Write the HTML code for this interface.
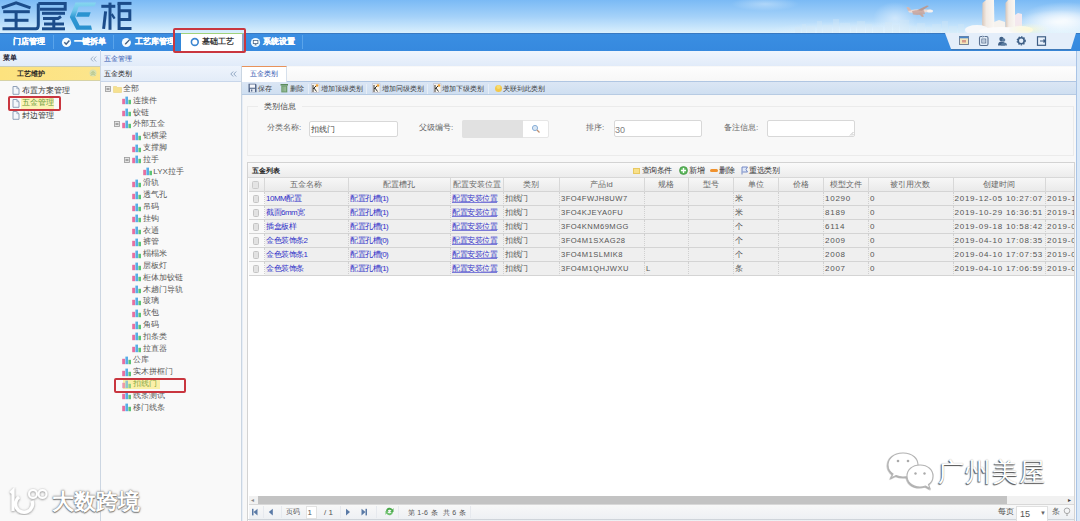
<!DOCTYPE html><html><head><meta charset="utf-8"><style>
*{box-sizing:border-box;margin:0;padding:0}
html,body{width:1080px;height:521px;overflow:hidden;background:#f8f8f8;font-family:"Liberation Sans",sans-serif;font-size:8px;color:#333}
.a{position:absolute}
.t{position:absolute;white-space:nowrap;line-height:10px}
svg{position:absolute;overflow:visible}
</style></head><body>
<div class="a" style="left:0;top:0;width:1080px;height:33px;background:linear-gradient(#7abaf5,#a4d1f9 50%,#daf0fd)"></div>
<div class="a" style="left:690px;top:0;width:390px;height:33px;background:radial-gradient(ellipse 34px 7px at 75px 4px,rgba(255,255,255,.35),rgba(255,255,255,0)),radial-gradient(ellipse 22px 16px at 205px 18px,rgba(255,255,255,.45),rgba(255,255,255,0)),radial-gradient(ellipse 90px 9px at 170px 30px,rgba(255,255,255,.35),rgba(255,255,255,0)),radial-gradient(ellipse 45px 18px at 375px 20px,rgba(255,255,255,.75),rgba(255,255,255,0))"></div>
<svg style="left:795px;top:0" width="175" height="33" viewBox="0 0 175 33"><g fill="#d4e8f6" opacity=".35"><rect x="0" y="27" width="6" height="6"/><rect x="7" y="24" width="4" height="9"/><rect x="12" y="26" width="8" height="7"/><rect x="22" y="21" width="5" height="12"/><rect x="28" y="25" width="9" height="8"/><rect x="38" y="19" width="6" height="14"/><rect x="45" y="23" width="10" height="10"/><rect x="56" y="26" width="5" height="7"/><rect x="62" y="21" width="8" height="12"/><rect x="71" y="24" width="6" height="9"/><rect x="78" y="27" width="10" height="6"/><rect x="90" y="22" width="7" height="11"/><rect x="98" y="25" width="6" height="8"/><rect x="105" y="20" width="9" height="13"/><rect x="115" y="26" width="6" height="7"/><rect x="122" y="23" width="8" height="10"/><rect x="131" y="27" width="5" height="6"/><rect x="137" y="24" width="9" height="9"/><rect x="147" y="21" width="6" height="12"/><rect x="154" y="26" width="8" height="7"/><rect x="163" y="24" width="6" height="9"/></g></svg>
<svg style="left:905px;top:3px" width="30" height="16" viewBox="0 0 30 16"><path d="M3 7.5 Q14 5.5 26 6.8 Q29 7.6 26 9 Q14 10.2 4 9.6Z" fill="#ecdcd6"/><path d="M7 8 Q12 6.5 19 7.2 L20 11 Q13 12.5 8 11.5Z" fill="#c9a59c" opacity=".85"/><path d="M12 7.2 L22 2.5 L24 3 L17 7.8Z" fill="#b89a94"/><path d="M13 10 L17 14 L19 13.6 L16.5 9.6Z" fill="#c4a8a0"/><ellipse cx="25" cy="8" rx="3" ry="1.6" fill="#f6f2f0"/><path d="M3 7.8 L1.5 4 L4 4.2 L6.5 7.5Z" fill="#d6b8b0"/></svg>
<svg style="left:955px;top:0" width="90" height="33" viewBox="0 0 90 33"><defs><linearGradient id="bg1" x1="0" x2="1"><stop offset="0" stop-color="#d9c6b8"/><stop offset=".35" stop-color="#f2ebe5"/><stop offset="1" stop-color="#faf7f3"/></linearGradient></defs><path d="M27 33 L27.5 3 L31 0 L39 0 L39.5 33Z" fill="url(#bg1)"/><path d="M50.5 33 L50.5 3 L53 0 L60 0 L60 33Z" fill="url(#bg1)"/><path d="M60 33 L60 15 L63 13 L67 14 L67 33Z" fill="#f4e8ee"/><path d="M39 33 L39 22 L44 20 L50 22 L50 33Z" fill="#f6f3ef"/><ellipse cx="22" cy="30" rx="12" ry="5" fill="#f6f8fa"/><ellipse cx="46" cy="31" rx="22" ry="4" fill="#fbfbfb"/><ellipse cx="66" cy="30" rx="12" ry="4" fill="#f8f8f4"/></svg>
<div class="a" style="left:1010px;top:8px;width:70px;height:25px;background:radial-gradient(ellipse 40px 12px at 48px 14px,rgba(255,255,255,.75),rgba(255,255,255,0)),radial-gradient(ellipse 20px 6px at 20px 21px,rgba(255,250,200,.7),rgba(255,255,255,0))"></div>
<svg style="left:0;top:0" width="140" height="33" viewBox="0 0 140 33"><g fill="none" stroke="#1b4c8a" stroke-width="3" stroke-linecap="butt" stroke-linejoin="miter"><path d="M1.8 7.8 L16.1 2.9 L30.5 7.8"/><path d="M3.2 11.7 H29.8"/><path d="M4.4 20.3 H28.5"/><path d="M16.1 11.7 V28.8"/><path d="M2.5 28.8 H36 Q38.3 28.8 38.3 25 V3.5"/><path d="M38.3 3.5 H65.2 V9.2 H40"/><path d="M42 13.3 H65"/><path d="M43 18.4 H58 L61 16.5"/><path d="M44 24 H64"/><path d="M53.8 18.4 V28.8"/><path d="M42 28.8 H65"/><path d="M101.3 6.3 H115.3"/><path d="M110 2.6 V29.8"/><path d="M105.6 11.3 L103.6 28.8"/><path d="M111.6 14 L114.6 18.6" stroke-width="2.3"/><path d="M117.5 3.4 H131.5"/><path d="M119.1 3.4 V28.5 H131.5"/><path d="M119.1 10.8 H129.8 V19.4 H119.1"/></g><defs><linearGradient id="eg" x1="0" y1="0" x2="0" y2="1"><stop offset="0" stop-color="#86d6ef"/><stop offset=".3" stop-color="#6cc4ea"/><stop offset=".55" stop-color="#2f98d3"/><stop offset="1" stop-color="#2a90ce"/></linearGradient></defs><path d="M75.5 2.5 L96.1 2.5 L94.5 6.3 L78.7 6.5 L75.2 17 L79.6 25.6 L91 25.6 L92 29.7 L76.4 29.7 L69.8 17.1 Z" fill="url(#eg)"/><path d="M78 12.3 L90.7 12.3 L89.1 16.8 L76.1 16.8 Z" fill="#2b93d0"/></svg>
<div class="a" style="left:0;top:33px;width:1080px;height:17.5px;background:linear-gradient(#3a8ee2,#3689de);border-top:1px solid #3879c2"></div>
<div class="a" style="left:53px;top:35px;width:1px;height:14px;background:#5aa4ea"></div>
<div class="a" style="left:113px;top:35px;width:1px;height:14px;background:#5aa4ea"></div>
<div class="a" style="left:302px;top:35px;width:1px;height:14px;background:#5aa4ea"></div>
<svg style="left:940px;top:33px" width="140" height="18" viewBox="0 0 140 18"><path d="M5 0 H136 L131 16 H11 Z" fill="#e4eefa"/><path d="M11 16 H131 L130.6 17.2 H11.3Z" fill="#3f79b8"/></svg>
<svg style="left:955px;top:35px" width="95" height="12" viewBox="0 0 95 12"><rect x="4.5" y="1.5" width="9" height="8" fill="#f3e6bc" stroke="#6a7a90" stroke-width=".9"/><rect x="4.5" y="1.5" width="9" height="1.8" fill="#4a86c8"/><rect x="7" y="5" width="4" height="2.5" fill="#d89a8a"/><path d="M27 1.5 H25.8 Q24.5 1.5 24.5 3 V9 Q24.5 10.5 26 10.5 H31.5 Q33 10.5 33 9 V3 Q33 1.5 31.5 1.5 H29.5" fill="#e4eef9" stroke="#5a7090" stroke-width="1.1"/><path d="M27.5 0.5 L29.3 1.5 L27.5 2.7Z" fill="#5a7090"/><rect x="26.8" y="4" width="4" height="4" fill="none" stroke="#5a7090" stroke-width=".8"/><path d="M27.5 6 H30" stroke="#5a7090" stroke-width=".6"/><circle cx="46.5" cy="4" r="2.2" fill="#3f5f86"/><path d="M43 10.5 Q43 6.5 46.5 6.5 Q50 6.5 50 10.5Z" fill="#3f5f86"/><circle cx="48.5" cy="5" r="1.8" fill="#5a7a9e"/><path d="M46 10.5 Q46 7.5 49 7.5 Q52 7.5 52 10.5Z" fill="#5a7a9e"/><circle cx="66.2" cy="5.8" r="3" fill="none" stroke="#3f5f86" stroke-width="1.6"/><circle cx="66.2" cy="5.8" r="4" fill="none" stroke="#3f5f86" stroke-width="1.3" stroke-dasharray="1.4 1.2"/><rect x="82.5" y="1.8" width="8" height="8.5" fill="#e8f0fa" stroke="#3f5f86" stroke-width="1.2"/><path d="M85 6 H90 M88.5 4.5 L90.3 6 L88.5 7.5" stroke="#3f5f86" stroke-width="1.2" fill="none"/></svg>
<div class="t" style="left:13px;top:37px;color:#fff;font-weight:bold;-webkit-text-stroke:.2px #fff">门店管理</div>
<svg style="left:62px;top:38px" width="10" height="10" viewBox="0 0 10 10"><circle cx="4.5" cy="4.4" r="4.6" fill="#f6fcff"/><path d="M2.3 4.2 L4.2 6.2 L7.4 2.4" stroke="#44638a" stroke-width="1.5" fill="none"/></svg>
<div class="t" style="left:74px;top:37px;color:#fff;font-weight:bold;-webkit-text-stroke:.2px #fff">一键拆单</div>
<svg style="left:122px;top:38px" width="10" height="10" viewBox="0 0 10 10"><circle cx="4.4" cy="4.5" r="4.5" fill="#f4fbff"/><path d="M6.2 0.3 L9.5 0 L9.5 3.2Z" fill="#3a8de0"/><path d="M3.2 6.3 L7.6 1.6" stroke="#3c5878" stroke-width="1.3" fill="none"/><path d="M2.6 7 L3.2 5.8 L3.9 6.5Z" fill="#e8b090"/></svg>
<div class="t" style="left:135px;top:37px;color:#fff;font-weight:bold;-webkit-text-stroke:.2px #fff">工艺库管理</div>
<svg style="left:250.8px;top:38px" width="10" height="10" viewBox="0 0 10 10"><circle cx="4.5" cy="4.5" r="4.6" fill="#ecf9ff"/><rect x="2.3" y="2.4" width="4.6" height="3.2" fill="#fff" stroke="#4a6688" stroke-width=".8"/><path d="M4.6 5.6 V6.8 M3.6 6.9 H5.6" stroke="#4a6688" stroke-width=".8"/></svg>
<div class="t" style="left:263px;top:37px;color:#fff;font-weight:bold;-webkit-text-stroke:.2px #fff">系统设置</div>
<div class="a" style="left:174px;top:33px;width:7px;height:17.5px;background:#3287d9"></div>
<div class="a" style="left:181px;top:33px;width:63px;height:17.5px;background:#fff;border-top:1px solid #9fd27c;border-right:2px solid #8aa4c8"></div>
<svg style="left:190px;top:37px" width="10" height="10" viewBox="0 0 10 10"><circle cx="4.8" cy="5" r="3.4" fill="none" stroke="#3a85d0" stroke-width="1.6"/></svg>
<div class="t" style="left:202px;top:37px;color:#333;font-weight:bold">基础工艺</div>
<div class="a" style="left:0;top:50.5px;width:1080px;height:16px;background:linear-gradient(#eff5fd,#e1ebf9);border-bottom:1px solid #c2d2e8"></div>
<div class="a" style="left:0;top:66px;width:100px;height:455px;background:#f9f9f9"></div>
<div class="a" style="left:100px;top:50px;width:1px;height:16px;background:#c8d6ea"></div>
<div class="t" style="left:3px;top:53px;color:#223;font-weight:bold;font-size:7px">菜单</div>
<svg style="left:90px;top:55.5px" width="7" height="6" viewBox="0 0 7 6"><path d="M3.2 .5 L.8 3 L3.2 5.5 M6.2 .5 L3.8 3 L6.2 5.5" stroke="#9fb2c8" stroke-width="1" fill="none"/></svg>
<div class="a" style="left:0;top:65.5px;width:100px;height:15.5px;background:linear-gradient(90deg,#fde27e,#fce58c);border-top:1px solid #c9cdb8;border-bottom:1px solid #d6d2a6"></div>
<div class="t" style="left:17px;top:68.5px;color:#222;font-weight:bold;font-size:7px">工艺维护</div>
<svg style="left:89px;top:69px" width="8" height="8" viewBox="0 0 8 8"><circle cx="4" cy="4" r="3.5" fill="#d7dfb0"/><path d="M2 4.5 L4 2.5 L6 4.5 M2 6.5 L4 4.5 L6 6.5" stroke="#9ab070" stroke-width=".8" fill="none"/></svg>
<svg style="left:12px;top:86.0px" width="8" height="9" viewBox="0 0 8 9"><path d="M1 0.5 H4.8 L7 2.7 V8.3 H1Z" fill="#f4f7fb" stroke="#8496b0" stroke-width=".9"/><path d="M4.8 .5 V2.7 H7" fill="none" stroke="#8496b0" stroke-width=".6"/></svg>
<div class="t" style="left:22px;top:85.5px;color:#333">布置方案管理</div>
<svg style="left:12px;top:98.5px" width="8" height="9" viewBox="0 0 8 9"><path d="M1 0.5 H4.8 L7 2.7 V8.3 H1Z" fill="#f4f7fb" stroke="#8496b0" stroke-width=".9"/><path d="M4.8 .5 V2.7 H7" fill="none" stroke="#8496b0" stroke-width=".6"/></svg>
<div class="t" style="left:22px;top:98.0px;color:#7aa040">五金管理</div>
<svg style="left:12px;top:111.0px" width="8" height="9" viewBox="0 0 8 9"><path d="M1 0.5 H4.8 L7 2.7 V8.3 H1Z" fill="#f4f7fb" stroke="#8496b0" stroke-width=".9"/><path d="M4.8 .5 V2.7 H7" fill="none" stroke="#8496b0" stroke-width=".6"/></svg>
<div class="t" style="left:22px;top:110.5px;color:#333">封边管理</div>
<div class="a" style="left:21px;top:98px;width:33px;height:11px;background:#fbf3b8"></div>
<div class="t" style="left:22px;top:98px;color:#6a9a3a">五金管理</div>
<div class="t" style="left:104px;top:53.5px;color:#2f55b0;font-size:7px">五金管理</div>
<div class="a" style="left:100px;top:66px;width:141px;height:455px;background:#f9f9f9;border-left:1px solid #ccd6e2"></div>
<div class="a" style="left:101px;top:66px;width:140px;height:16px;background:linear-gradient(#eef4fc,#e3ecf8);border-bottom:1px solid #c8d6ea"></div>
<div class="t" style="left:104px;top:69px;color:#222;font-size:7px">五金类别</div>
<svg style="left:230px;top:71px" width="7" height="6" viewBox="0 0 7 6"><path d="M3.2 .5 L.8 3 L3.2 5.5 M6.2 .5 L3.8 3 L6.2 5.5" stroke="#8fa6c2" stroke-width="1" fill="none"/></svg>
<svg style="left:105px;top:86.0px" width="6" height="6" viewBox="0 0 6 6"><rect x=".5" y=".5" width="5" height="5" fill="#e4e4e4" stroke="#9a9a9a" stroke-width=".8"/><path d="M1.5 3 H4.5" stroke="#555" stroke-width=".9"/></svg>
<svg style="left:112.5px;top:85.5px" width="10" height="8" viewBox="0 0 10 8"><path d="M0.5 0.5 H3.5 L4.5 1.5 H8.5 V6.5 H0.5Z" fill="#f6e190" stroke="#e8cf70" stroke-width=".5"/></svg>
<div class="t" style="left:123px;top:84.0px;color:#5a5a5a">全部</div>
<svg style="left:122.0px;top:96.3px;" width="10" height="9" viewBox="0 0 10 9"><rect x="0.2" y="2.8" width="2.8" height="5.4" fill="#e670a0"/><rect x="3.4" y="0.6" width="2.6" height="7.6" fill="#58ace6"/><rect x="6.4" y="3.8" width="2.6" height="4.4" fill="#5cc476"/></svg>
<div class="t" style="left:132.5px;top:95.8px;color:#5a5a5a">连接件</div>
<svg style="left:122.0px;top:108.1px;" width="10" height="9" viewBox="0 0 10 9"><rect x="0.2" y="2.8" width="2.8" height="5.4" fill="#e670a0"/><rect x="3.4" y="0.6" width="2.6" height="7.6" fill="#58ace6"/><rect x="6.4" y="3.8" width="2.6" height="4.4" fill="#5cc476"/></svg>
<div class="t" style="left:132.5px;top:107.6px;color:#5a5a5a">铰链</div>
<svg style="left:114.0px;top:121.4px" width="6" height="6" viewBox="0 0 6 6"><rect x=".5" y=".5" width="5" height="5" fill="#e4e4e4" stroke="#9a9a9a" stroke-width=".8"/><path d="M1.5 3 H4.5" stroke="#555" stroke-width=".9"/></svg>
<svg style="left:122.0px;top:119.9px;" width="10" height="9" viewBox="0 0 10 9"><rect x="0.2" y="2.8" width="2.8" height="5.4" fill="#e670a0"/><rect x="3.4" y="0.6" width="2.6" height="7.6" fill="#58ace6"/><rect x="6.4" y="3.8" width="2.6" height="4.4" fill="#5cc476"/></svg>
<div class="t" style="left:132.5px;top:119.4px;color:#5a5a5a">外部五金</div>
<svg style="left:132.4px;top:131.7px;" width="10" height="9" viewBox="0 0 10 9"><rect x="0.2" y="2.8" width="2.8" height="5.4" fill="#e670a0"/><rect x="3.4" y="0.6" width="2.6" height="7.6" fill="#58ace6"/><rect x="6.4" y="3.8" width="2.6" height="4.4" fill="#5cc476"/></svg>
<div class="t" style="left:142.9px;top:131.2px;color:#5a5a5a">铝横梁</div>
<svg style="left:132.4px;top:143.5px;" width="10" height="9" viewBox="0 0 10 9"><rect x="0.2" y="2.8" width="2.8" height="5.4" fill="#e670a0"/><rect x="3.4" y="0.6" width="2.6" height="7.6" fill="#58ace6"/><rect x="6.4" y="3.8" width="2.6" height="4.4" fill="#5cc476"/></svg>
<div class="t" style="left:142.9px;top:143.0px;color:#5a5a5a">支撑脚</div>
<svg style="left:124.4px;top:156.8px" width="6" height="6" viewBox="0 0 6 6"><rect x=".5" y=".5" width="5" height="5" fill="#e4e4e4" stroke="#9a9a9a" stroke-width=".8"/><path d="M1.5 3 H4.5" stroke="#555" stroke-width=".9"/></svg>
<svg style="left:132.4px;top:155.3px;" width="10" height="9" viewBox="0 0 10 9"><rect x="0.2" y="2.8" width="2.8" height="5.4" fill="#e670a0"/><rect x="3.4" y="0.6" width="2.6" height="7.6" fill="#58ace6"/><rect x="6.4" y="3.8" width="2.6" height="4.4" fill="#5cc476"/></svg>
<div class="t" style="left:142.9px;top:154.8px;color:#5a5a5a">拉手</div>
<svg style="left:142.8px;top:167.10000000000002px;" width="10" height="9" viewBox="0 0 10 9"><rect x="0.2" y="2.8" width="2.8" height="5.4" fill="#e670a0"/><rect x="3.4" y="0.6" width="2.6" height="7.6" fill="#58ace6"/><rect x="6.4" y="3.8" width="2.6" height="4.4" fill="#5cc476"/></svg>
<div class="t" style="left:153.3px;top:166.60000000000002px;color:#5a5a5a">LYX拉手</div>
<svg style="left:132.4px;top:178.9px;" width="10" height="9" viewBox="0 0 10 9"><rect x="0.2" y="2.8" width="2.8" height="5.4" fill="#e670a0"/><rect x="3.4" y="0.6" width="2.6" height="7.6" fill="#58ace6"/><rect x="6.4" y="3.8" width="2.6" height="4.4" fill="#5cc476"/></svg>
<div class="t" style="left:142.9px;top:178.4px;color:#5a5a5a">滑轨</div>
<svg style="left:132.4px;top:190.7px;" width="10" height="9" viewBox="0 0 10 9"><rect x="0.2" y="2.8" width="2.8" height="5.4" fill="#e670a0"/><rect x="3.4" y="0.6" width="2.6" height="7.6" fill="#58ace6"/><rect x="6.4" y="3.8" width="2.6" height="4.4" fill="#5cc476"/></svg>
<div class="t" style="left:142.9px;top:190.2px;color:#5a5a5a">透气孔</div>
<svg style="left:132.4px;top:202.5px;" width="10" height="9" viewBox="0 0 10 9"><rect x="0.2" y="2.8" width="2.8" height="5.4" fill="#e670a0"/><rect x="3.4" y="0.6" width="2.6" height="7.6" fill="#58ace6"/><rect x="6.4" y="3.8" width="2.6" height="4.4" fill="#5cc476"/></svg>
<div class="t" style="left:142.9px;top:202.0px;color:#5a5a5a">吊码</div>
<svg style="left:132.4px;top:214.3px;" width="10" height="9" viewBox="0 0 10 9"><rect x="0.2" y="2.8" width="2.8" height="5.4" fill="#e670a0"/><rect x="3.4" y="0.6" width="2.6" height="7.6" fill="#58ace6"/><rect x="6.4" y="3.8" width="2.6" height="4.4" fill="#5cc476"/></svg>
<div class="t" style="left:142.9px;top:213.8px;color:#5a5a5a">挂钩</div>
<svg style="left:132.4px;top:226.10000000000002px;" width="10" height="9" viewBox="0 0 10 9"><rect x="0.2" y="2.8" width="2.8" height="5.4" fill="#e670a0"/><rect x="3.4" y="0.6" width="2.6" height="7.6" fill="#58ace6"/><rect x="6.4" y="3.8" width="2.6" height="4.4" fill="#5cc476"/></svg>
<div class="t" style="left:142.9px;top:225.60000000000002px;color:#5a5a5a">衣通</div>
<svg style="left:132.4px;top:237.9px;" width="10" height="9" viewBox="0 0 10 9"><rect x="0.2" y="2.8" width="2.8" height="5.4" fill="#e670a0"/><rect x="3.4" y="0.6" width="2.6" height="7.6" fill="#58ace6"/><rect x="6.4" y="3.8" width="2.6" height="4.4" fill="#5cc476"/></svg>
<div class="t" style="left:142.9px;top:237.4px;color:#5a5a5a">裤管</div>
<svg style="left:132.4px;top:249.70000000000002px;" width="10" height="9" viewBox="0 0 10 9"><rect x="0.2" y="2.8" width="2.8" height="5.4" fill="#e670a0"/><rect x="3.4" y="0.6" width="2.6" height="7.6" fill="#58ace6"/><rect x="6.4" y="3.8" width="2.6" height="4.4" fill="#5cc476"/></svg>
<div class="t" style="left:142.9px;top:249.20000000000002px;color:#5a5a5a">榻榻米</div>
<svg style="left:132.4px;top:261.5px;" width="10" height="9" viewBox="0 0 10 9"><rect x="0.2" y="2.8" width="2.8" height="5.4" fill="#e670a0"/><rect x="3.4" y="0.6" width="2.6" height="7.6" fill="#58ace6"/><rect x="6.4" y="3.8" width="2.6" height="4.4" fill="#5cc476"/></svg>
<div class="t" style="left:142.9px;top:261.0px;color:#5a5a5a">层板灯</div>
<svg style="left:132.4px;top:273.3px;" width="10" height="9" viewBox="0 0 10 9"><rect x="0.2" y="2.8" width="2.8" height="5.4" fill="#e670a0"/><rect x="3.4" y="0.6" width="2.6" height="7.6" fill="#58ace6"/><rect x="6.4" y="3.8" width="2.6" height="4.4" fill="#5cc476"/></svg>
<div class="t" style="left:142.9px;top:272.8px;color:#5a5a5a">柜体加铰链</div>
<svg style="left:132.4px;top:285.1px;" width="10" height="9" viewBox="0 0 10 9"><rect x="0.2" y="2.8" width="2.8" height="5.4" fill="#e670a0"/><rect x="3.4" y="0.6" width="2.6" height="7.6" fill="#58ace6"/><rect x="6.4" y="3.8" width="2.6" height="4.4" fill="#5cc476"/></svg>
<div class="t" style="left:142.9px;top:284.6px;color:#5a5a5a">木趟门导轨</div>
<svg style="left:132.4px;top:296.9px;" width="10" height="9" viewBox="0 0 10 9"><rect x="0.2" y="2.8" width="2.8" height="5.4" fill="#e670a0"/><rect x="3.4" y="0.6" width="2.6" height="7.6" fill="#58ace6"/><rect x="6.4" y="3.8" width="2.6" height="4.4" fill="#5cc476"/></svg>
<div class="t" style="left:142.9px;top:296.4px;color:#5a5a5a">玻璃</div>
<svg style="left:132.4px;top:308.70000000000005px;" width="10" height="9" viewBox="0 0 10 9"><rect x="0.2" y="2.8" width="2.8" height="5.4" fill="#e670a0"/><rect x="3.4" y="0.6" width="2.6" height="7.6" fill="#58ace6"/><rect x="6.4" y="3.8" width="2.6" height="4.4" fill="#5cc476"/></svg>
<div class="t" style="left:142.9px;top:308.20000000000005px;color:#5a5a5a">软包</div>
<svg style="left:132.4px;top:320.5px;" width="10" height="9" viewBox="0 0 10 9"><rect x="0.2" y="2.8" width="2.8" height="5.4" fill="#e670a0"/><rect x="3.4" y="0.6" width="2.6" height="7.6" fill="#58ace6"/><rect x="6.4" y="3.8" width="2.6" height="4.4" fill="#5cc476"/></svg>
<div class="t" style="left:142.9px;top:320.0px;color:#5a5a5a">角码</div>
<svg style="left:132.4px;top:332.3px;" width="10" height="9" viewBox="0 0 10 9"><rect x="0.2" y="2.8" width="2.8" height="5.4" fill="#e670a0"/><rect x="3.4" y="0.6" width="2.6" height="7.6" fill="#58ace6"/><rect x="6.4" y="3.8" width="2.6" height="4.4" fill="#5cc476"/></svg>
<div class="t" style="left:142.9px;top:331.8px;color:#5a5a5a">扣条类</div>
<svg style="left:132.4px;top:344.1px;" width="10" height="9" viewBox="0 0 10 9"><rect x="0.2" y="2.8" width="2.8" height="5.4" fill="#e670a0"/><rect x="3.4" y="0.6" width="2.6" height="7.6" fill="#58ace6"/><rect x="6.4" y="3.8" width="2.6" height="4.4" fill="#5cc476"/></svg>
<div class="t" style="left:142.9px;top:343.6px;color:#5a5a5a">拉直器</div>
<svg style="left:122.0px;top:355.90000000000003px;" width="10" height="9" viewBox="0 0 10 9"><rect x="0.2" y="2.8" width="2.8" height="5.4" fill="#e670a0"/><rect x="3.4" y="0.6" width="2.6" height="7.6" fill="#58ace6"/><rect x="6.4" y="3.8" width="2.6" height="4.4" fill="#5cc476"/></svg>
<div class="t" style="left:132.5px;top:355.40000000000003px;color:#5a5a5a">公库</div>
<svg style="left:122.0px;top:367.70000000000005px;" width="10" height="9" viewBox="0 0 10 9"><rect x="0.2" y="2.8" width="2.8" height="5.4" fill="#e670a0"/><rect x="3.4" y="0.6" width="2.6" height="7.6" fill="#58ace6"/><rect x="6.4" y="3.8" width="2.6" height="4.4" fill="#5cc476"/></svg>
<div class="t" style="left:132.5px;top:367.20000000000005px;color:#5a5a5a">实木拼框门</div>
<div class="a" style="left:123.0px;top:379.5px;width:37px;height:9.5px;background:#fbf0a8"></div>
<svg style="left:122.0px;top:379.5px;opacity:.65;" width="10" height="9" viewBox="0 0 10 9"><rect x="0.2" y="2.8" width="2.8" height="5.4" fill="#e670a0"/><rect x="3.4" y="0.6" width="2.6" height="7.6" fill="#58ace6"/><rect x="6.4" y="3.8" width="2.6" height="4.4" fill="#5cc476"/></svg>
<div class="t" style="left:132.5px;top:379.0px;color:#8aa848">扣线门</div>
<svg style="left:122.0px;top:391.3px;" width="10" height="9" viewBox="0 0 10 9"><rect x="0.2" y="2.8" width="2.8" height="5.4" fill="#e670a0"/><rect x="3.4" y="0.6" width="2.6" height="7.6" fill="#58ace6"/><rect x="6.4" y="3.8" width="2.6" height="4.4" fill="#5cc476"/></svg>
<div class="t" style="left:132.5px;top:390.8px;color:#5a5a5a">线条测试</div>
<svg style="left:122.0px;top:403.1px;" width="10" height="9" viewBox="0 0 10 9"><rect x="0.2" y="2.8" width="2.8" height="5.4" fill="#e670a0"/><rect x="3.4" y="0.6" width="2.6" height="7.6" fill="#58ace6"/><rect x="6.4" y="3.8" width="2.6" height="4.4" fill="#5cc476"/></svg>
<div class="t" style="left:132.5px;top:402.6px;color:#5a5a5a">移门线条</div>
<div class="a" style="left:241px;top:66px;width:835px;height:455px;background:#f8f8f8;border-left:1px solid #c9d5e2"></div>
<div class="a" style="left:242px;top:66.5px;width:834px;height:15px;background:linear-gradient(#fdfdfd,#f7f7f7);border-bottom:1px solid #b0c6e2"></div>
<div class="a" style="left:242px;top:66px;width:45px;height:16px;background:#fff;border-top:1.5px solid #e8925a;border-right:1px solid #d6e0ec"></div>
<div class="t" style="left:250px;top:69px;color:#2f55b0;font-size:7px">五金类别</div>
<div class="a" style="left:242px;top:82px;width:834px;height:13px;background:linear-gradient(#dbe6f4,#cfdff1);border-bottom:1px solid #b7cbe3"></div>
<div class="a" style="left:242px;top:95px;width:1px;height:426px;background:#e8eef6"></div>
<div class="a" style="left:1076px;top:50.5px;width:4px;height:471px;background:#d9e8f8;border-left:1px solid #a9c4e6"></div>
<svg style="left:247.5px;top:83px" width="9" height="10" viewBox="0 0 9 10"><path d="M.5 .8 H7.5 L8.5 1.8 V9.3 H.5Z" fill="#56698a"/><rect x="1.8" y="1.5" width="5.2" height="3.2" fill="#f4f6fa"/><rect x="2" y="5.8" width="5" height="3.5" fill="#dfe5ee"/><rect x="3" y="6.5" width="1.3" height="2" fill="#56698a"/></svg>
<div class="t" style="left:258px;top:83.5px;color:#3c3c3c;font-size:7px">保存</div>
<svg style="left:279.5px;top:83px" width="9" height="10" viewBox="0 0 9 10"><rect x=".5" y="1" width="7.5" height="1.6" fill="#5a8a5a"/><rect x="1.3" y="2.6" width="6" height="6.8" fill="#6a9a6a"/><path d="M3 3.5 V8.5 M4.3 3.5 V8.5 M5.6 3.5 V8.5" stroke="#cfe2cf" stroke-width=".5"/></svg>
<div class="t" style="left:289.5px;top:83.5px;color:#3c3c3c;font-size:7px">删除</div>
<svg style="left:311px;top:83px" width="9" height="10" viewBox="0 0 9 10"><rect x=".5" y=".8" width="7.5" height="8.5" fill="#fbf6ec" stroke="#b8b8c8" stroke-width=".6"/><path d="M2 2 V9 M2 6 L5 3 M3 5 L5.5 8.5" stroke="#333" stroke-width="1" fill="none"/><circle cx="6" cy="2.5" r="1.3" fill="#f0a030"/></svg>
<div class="t" style="left:320.5px;top:83.5px;color:#3c3c3c;font-size:7px">增加顶级类别</div>
<svg style="left:372px;top:83px" width="9" height="10" viewBox="0 0 9 10"><rect x=".5" y=".8" width="7.5" height="8.5" fill="#fbf6ec" stroke="#b8b8c8" stroke-width=".6"/><path d="M2 2 V9 M2 6 L5 3 M3 5 L5.5 8.5" stroke="#333" stroke-width="1" fill="none"/><circle cx="6" cy="2.5" r="1.3" fill="#f0a030"/></svg>
<div class="t" style="left:381.5px;top:83.5px;color:#3c3c3c;font-size:7px">增加同级类别</div>
<svg style="left:432.5px;top:83px" width="9" height="10" viewBox="0 0 9 10"><rect x=".5" y=".8" width="7.5" height="8.5" fill="#fbf6ec" stroke="#b8b8c8" stroke-width=".6"/><path d="M2 2 V9 M2 6 L5 3 M3 5 L5.5 8.5" stroke="#333" stroke-width="1" fill="none"/><circle cx="6" cy="2.5" r="1.3" fill="#f0a030"/></svg>
<div class="t" style="left:442px;top:83.5px;color:#3c3c3c;font-size:7px">增加下级类别</div>
<svg style="left:493.5px;top:83px" width="9" height="10" viewBox="0 0 9 10"><circle cx="4.5" cy="5.5" r="3.5" fill="#f3c84a"/><circle cx="4.5" cy="4" r="2" fill="#f8dc70"/></svg>
<div class="t" style="left:503px;top:83.5px;color:#3c3c3c;font-size:7px">关联到此类别</div>
<div class="a" style="left:308px;top:84px;width:1px;height:10px;background:#e8eef6"></div>
<div class="a" style="left:366px;top:84px;width:1px;height:10px;background:#e8eef6"></div>
<div class="a" style="left:426.5px;top:84px;width:1px;height:10px;background:#e8eef6"></div>
<div class="a" style="left:488px;top:84px;width:1px;height:10px;background:#e8eef6"></div>
<div class="a" style="left:247px;top:106px;width:827px;height:50px;border:1px solid #ebebeb"></div>
<div class="a" style="left:258px;top:101px;width:44px;height:11px;background:#f8f8f8"></div>
<div class="t" style="left:264px;top:102px;color:#444">类别信息</div>
<div class="t" style="left:267px;top:123px;color:#666">分类名称:</div>
<div class="a" style="left:309px;top:120.5px;width:89px;height:16.5px;background:#fff;border:1px solid #d8d8d8;border-radius:2px"></div>
<div class="t" style="left:310.5px;top:124.5px;color:#444">扣线门</div>
<div class="t" style="left:419px;top:123px;color:#666">父级编号:</div>
<div class="a" style="left:462px;top:120px;width:87px;height:18px;background:#fff;border:1px solid #e6e6e6;border-radius:2px"></div>
<div class="a" style="left:462px;top:120px;width:61px;height:18px;background:#e1e1e1;border-radius:2px 0 0 2px"></div>
<svg style="left:531px;top:124px" width="10" height="10" viewBox="0 0 10 10"><circle cx="4" cy="4" r="2.6" fill="#d8e6f4" stroke="#8ab0d8" stroke-width="1"/><path d="M6 6 L8.5 8.5" stroke="#c09070" stroke-width="1.3"/></svg>
<div class="t" style="left:586px;top:123px;color:#666">排序:</div>
<div class="a" style="left:614px;top:120px;width:88px;height:17px;background:#fff;border:1px solid #d8d8d8;border-radius:2px"></div>
<div class="t" style="left:615px;top:124.5px;color:#808080;font-size:9px">30</div>
<div class="t" style="left:724px;top:123px;color:#666">备注信息:</div>
<div class="a" style="left:766.5px;top:120px;width:88px;height:17px;background:#fff;border:1px solid #d8d8d8;border-radius:2px"></div>
<svg style="left:849px;top:131px" width="5" height="5" viewBox="0 0 5 5"><path d="M4.5 1 L1 4.5 M4.5 3 L3 4.5" stroke="#999" stroke-width=".6"/></svg>
<div class="a" style="left:247px;top:162px;width:828px;height:360px;background:#fff;border:1px solid #d3d3d3"></div>
<div class="a" style="left:248px;top:163px;width:826px;height:14.5px;background:linear-gradient(#fafafa,#ececec);border-bottom:1px solid #d8d8d8"></div>
<div class="t" style="left:252px;top:165.5px;color:#222;font-weight:bold;font-size:7px">五金列表</div>
<div class="a" style="left:632.5px;top:168px;width:7px;height:6px;background:#f8e08a;border:1px solid #e8c860"></div>
<div class="t" style="left:641.5px;top:165.5px;color:#333;letter-spacing:-.5px">查询条件</div>
<svg style="left:678.5px;top:166px" width="9" height="9" viewBox="0 0 9 9"><circle cx="4.5" cy="4.5" r="4" fill="#5cb85c" stroke="#3a8a3a" stroke-width=".6"/><path d="M4.5 2 V7 M2 4.5 H7" stroke="#fff" stroke-width="1.4"/></svg>
<div class="t" style="left:689px;top:165.5px;color:#333;letter-spacing:-.5px">新增</div>
<div class="a" style="left:710px;top:168.5px;width:7.5px;height:3.8px;background:#f0922e;border-radius:1.5px"></div>
<div class="t" style="left:719px;top:165.5px;color:#333;letter-spacing:-.5px">删除</div>
<svg style="left:740.5px;top:166px" width="8" height="9" viewBox="0 0 8 9"><path d="M1 8.5 V1 H6.5 L5 3.5 L6.5 6 H1.5" fill="#e0e8f8" stroke="#6a80c0" stroke-width=".9"/></svg>
<div class="t" style="left:749px;top:165.5px;color:#333;letter-spacing:-.5px">重选类别</div>
<div class="a" style="left:248.5px;top:177.5px;width:825px;height:14.5px;background:linear-gradient(#f7f7f7,#eaeaea);border-bottom:1px solid #d4d4d4"></div>
<div class="a" style="left:252px;top:181px;width:7px;height:7.5px;background:#e4e4e4;border:1px solid #cacaca;border-radius:1.5px"></div>
<div class="t" style="left:248px;top:180px;width:16px;text-align:center;color:#666"></div>
<div class="a" style="left:264px;top:177.5px;width:1px;height:14.5px;background:#d8d8d8"></div>
<div class="t" style="left:264px;top:180px;width:84px;text-align:center;color:#666">五金名称</div>
<div class="a" style="left:348px;top:177.5px;width:1px;height:14.5px;background:#d8d8d8"></div>
<div class="t" style="left:348px;top:180px;width:102px;text-align:center;color:#666">配置槽孔</div>
<div class="a" style="left:450px;top:177.5px;width:1px;height:14.5px;background:#d8d8d8"></div>
<div class="t" style="left:450px;top:180px;width:53px;text-align:center;color:#666">配置安装位置</div>
<div class="a" style="left:503px;top:177.5px;width:1px;height:14.5px;background:#d8d8d8"></div>
<div class="t" style="left:503px;top:180px;width:56px;text-align:center;color:#666">类别</div>
<div class="a" style="left:559px;top:177.5px;width:1px;height:14.5px;background:#d8d8d8"></div>
<div class="t" style="left:559px;top:180px;width:85px;text-align:center;color:#666">产品id</div>
<div class="a" style="left:644px;top:177.5px;width:1px;height:14.5px;background:#d8d8d8"></div>
<div class="t" style="left:644px;top:180px;width:44px;text-align:center;color:#666">规格</div>
<div class="a" style="left:688px;top:177.5px;width:1px;height:14.5px;background:#d8d8d8"></div>
<div class="t" style="left:688px;top:180px;width:45px;text-align:center;color:#666">型号</div>
<div class="a" style="left:733px;top:177.5px;width:1px;height:14.5px;background:#d8d8d8"></div>
<div class="t" style="left:733px;top:180px;width:45px;text-align:center;color:#666">单位</div>
<div class="a" style="left:778px;top:177.5px;width:1px;height:14.5px;background:#d8d8d8"></div>
<div class="t" style="left:778px;top:180px;width:45px;text-align:center;color:#666">价格</div>
<div class="a" style="left:823px;top:177.5px;width:1px;height:14.5px;background:#d8d8d8"></div>
<div class="t" style="left:823px;top:180px;width:45px;text-align:center;color:#666">模型文件</div>
<div class="a" style="left:868px;top:177.5px;width:1px;height:14.5px;background:#d8d8d8"></div>
<div class="t" style="left:868px;top:180px;width:84.5px;text-align:center;color:#666">被引用次数</div>
<div class="a" style="left:952.5px;top:177.5px;width:1px;height:14.5px;background:#d8d8d8"></div>
<div class="t" style="left:952.5px;top:180px;width:92.5px;text-align:center;color:#666">创建时间</div>
<div class="a" style="left:1045px;top:177.5px;width:1px;height:14.5px;background:#d8d8d8"></div>
<div class="t" style="left:1045px;top:180px;width:29px;text-align:center;color:#666"></div>
<div class="a" style="left:248.5px;top:192px;width:825px;height:304px;overflow:hidden">
<div class="a" style="left:0;top:0px;width:825px;height:14px;background:#efefef;border-bottom:1px solid #d4d4d4"></div>
<div class="a" style="left:0;top:0px;width:16px;height:13px;background:#f9f9f9"></div>
<div class="a" style="left:4px;top:3px;width:6.5px;height:7.5px;background:#e2e2e2;border:1px solid #c4c4c4;border-radius:1.5px"></div>
<div class="a" style="left:15.5px;top:0px;width:1px;height:14px;border-left:1px dotted #d0d0d0"></div>
<div class="t" style="left:17.5px;top:2px;color:#3030c8;font-size:8px;letter-spacing:-.5px;">10MM配置</div>
<div class="a" style="left:99.5px;top:0px;width:1px;height:14px;border-left:1px dotted #d0d0d0"></div>
<div class="t" style="left:101.5px;top:2px;color:#3030c8;font-size:8px;letter-spacing:-.5px;">配置孔槽(1)</div>
<div class="a" style="left:201.5px;top:0px;width:1px;height:14px;border-left:1px dotted #d0d0d0"></div>
<div class="t" style="left:203.5px;top:2px;color:#3030c8;font-size:8px;letter-spacing:-.5px;text-decoration:underline;text-decoration-color:#7a7ad8;">配置安装位置</div>
<div class="a" style="left:254.5px;top:0px;width:1px;height:14px;border-left:1px dotted #d0d0d0"></div>
<div class="t" style="left:256.5px;top:2px;color:#555;font-size:8px;letter-spacing:-.5px;">扣线门</div>
<div class="a" style="left:310.5px;top:0px;width:1px;height:14px;border-left:1px dotted #d0d0d0"></div>
<div class="t" style="left:312.5px;top:2px;color:#555;font-size:7.6px;letter-spacing:.45px;">3FO4FWJH8UW7</div>
<div class="a" style="left:395.5px;top:0px;width:1px;height:14px;border-left:1px dotted #d0d0d0"></div>
<div class="t" style="left:397.5px;top:2px;color:#555;font-size:7.6px;letter-spacing:.45px;"></div>
<div class="a" style="left:439.5px;top:0px;width:1px;height:14px;border-left:1px dotted #d0d0d0"></div>
<div class="t" style="left:441.5px;top:2px;color:#555;font-size:8px;letter-spacing:-.5px;"></div>
<div class="a" style="left:484.5px;top:0px;width:1px;height:14px;border-left:1px dotted #d0d0d0"></div>
<div class="t" style="left:486.5px;top:2px;color:#555;font-size:8px;letter-spacing:-.5px;">米</div>
<div class="a" style="left:529.5px;top:0px;width:1px;height:14px;border-left:1px dotted #d0d0d0"></div>
<div class="t" style="left:531.5px;top:2px;color:#555;font-size:8px;letter-spacing:-.5px;"></div>
<div class="a" style="left:574.5px;top:0px;width:1px;height:14px;border-left:1px dotted #d0d0d0"></div>
<div class="t" style="left:576.5px;top:2px;color:#555;font-size:8px;letter-spacing:.75px;">10290</div>
<div class="a" style="left:619.5px;top:0px;width:1px;height:14px;border-left:1px dotted #d0d0d0"></div>
<div class="t" style="left:621.5px;top:2px;color:#555;font-size:8px;letter-spacing:.75px;">0</div>
<div class="a" style="left:704.0px;top:0px;width:1px;height:14px;border-left:1px dotted #d0d0d0"></div>
<div class="t" style="left:706.0px;top:2px;color:#555;font-size:8px;letter-spacing:.75px;">2019-12-05 10:27:07</div>
<div class="a" style="left:796.5px;top:0px;width:1px;height:14px;border-left:1px dotted #d0d0d0"></div>
<div class="t" style="left:798.5px;top:2px;color:#555;font-size:8px;letter-spacing:.75px;">2019-12-05</div>
<div class="a" style="left:0;top:14px;width:825px;height:14px;background:#efefef;border-bottom:1px solid #d4d4d4"></div>
<div class="a" style="left:0;top:14px;width:16px;height:13px;background:#f9f9f9"></div>
<div class="a" style="left:4px;top:17px;width:6.5px;height:7.5px;background:#e2e2e2;border:1px solid #c4c4c4;border-radius:1.5px"></div>
<div class="a" style="left:15.5px;top:14px;width:1px;height:14px;border-left:1px dotted #d0d0d0"></div>
<div class="t" style="left:17.5px;top:16px;color:#3030c8;font-size:8px;letter-spacing:-.5px;">截面6mm宽</div>
<div class="a" style="left:99.5px;top:14px;width:1px;height:14px;border-left:1px dotted #d0d0d0"></div>
<div class="t" style="left:101.5px;top:16px;color:#3030c8;font-size:8px;letter-spacing:-.5px;">配置孔槽(1)</div>
<div class="a" style="left:201.5px;top:14px;width:1px;height:14px;border-left:1px dotted #d0d0d0"></div>
<div class="t" style="left:203.5px;top:16px;color:#3030c8;font-size:8px;letter-spacing:-.5px;text-decoration:underline;text-decoration-color:#7a7ad8;">配置安装位置</div>
<div class="a" style="left:254.5px;top:14px;width:1px;height:14px;border-left:1px dotted #d0d0d0"></div>
<div class="t" style="left:256.5px;top:16px;color:#555;font-size:8px;letter-spacing:-.5px;">扣线门</div>
<div class="a" style="left:310.5px;top:14px;width:1px;height:14px;border-left:1px dotted #d0d0d0"></div>
<div class="t" style="left:312.5px;top:16px;color:#555;font-size:7.6px;letter-spacing:.45px;">3FO4KJEYA0FU</div>
<div class="a" style="left:395.5px;top:14px;width:1px;height:14px;border-left:1px dotted #d0d0d0"></div>
<div class="t" style="left:397.5px;top:16px;color:#555;font-size:7.6px;letter-spacing:.45px;"></div>
<div class="a" style="left:439.5px;top:14px;width:1px;height:14px;border-left:1px dotted #d0d0d0"></div>
<div class="t" style="left:441.5px;top:16px;color:#555;font-size:8px;letter-spacing:-.5px;"></div>
<div class="a" style="left:484.5px;top:14px;width:1px;height:14px;border-left:1px dotted #d0d0d0"></div>
<div class="t" style="left:486.5px;top:16px;color:#555;font-size:8px;letter-spacing:-.5px;">米</div>
<div class="a" style="left:529.5px;top:14px;width:1px;height:14px;border-left:1px dotted #d0d0d0"></div>
<div class="t" style="left:531.5px;top:16px;color:#555;font-size:8px;letter-spacing:-.5px;"></div>
<div class="a" style="left:574.5px;top:14px;width:1px;height:14px;border-left:1px dotted #d0d0d0"></div>
<div class="t" style="left:576.5px;top:16px;color:#555;font-size:8px;letter-spacing:.75px;">8189</div>
<div class="a" style="left:619.5px;top:14px;width:1px;height:14px;border-left:1px dotted #d0d0d0"></div>
<div class="t" style="left:621.5px;top:16px;color:#555;font-size:8px;letter-spacing:.75px;">0</div>
<div class="a" style="left:704.0px;top:14px;width:1px;height:14px;border-left:1px dotted #d0d0d0"></div>
<div class="t" style="left:706.0px;top:16px;color:#555;font-size:8px;letter-spacing:.75px;">2019-10-29 16:36:51</div>
<div class="a" style="left:796.5px;top:14px;width:1px;height:14px;border-left:1px dotted #d0d0d0"></div>
<div class="t" style="left:798.5px;top:16px;color:#555;font-size:8px;letter-spacing:.75px;">2019-10-29</div>
<div class="a" style="left:0;top:28px;width:825px;height:14px;background:#efefef;border-bottom:1px solid #d4d4d4"></div>
<div class="a" style="left:0;top:28px;width:16px;height:13px;background:#f9f9f9"></div>
<div class="a" style="left:4px;top:31px;width:6.5px;height:7.5px;background:#e2e2e2;border:1px solid #c4c4c4;border-radius:1.5px"></div>
<div class="a" style="left:15.5px;top:28px;width:1px;height:14px;border-left:1px dotted #d0d0d0"></div>
<div class="t" style="left:17.5px;top:30px;color:#3030c8;font-size:8px;letter-spacing:-.5px;">插盒板样</div>
<div class="a" style="left:99.5px;top:28px;width:1px;height:14px;border-left:1px dotted #d0d0d0"></div>
<div class="t" style="left:101.5px;top:30px;color:#3030c8;font-size:8px;letter-spacing:-.5px;">配置孔槽(1)</div>
<div class="a" style="left:201.5px;top:28px;width:1px;height:14px;border-left:1px dotted #d0d0d0"></div>
<div class="t" style="left:203.5px;top:30px;color:#3030c8;font-size:8px;letter-spacing:-.5px;text-decoration:underline;text-decoration-color:#7a7ad8;">配置安装位置</div>
<div class="a" style="left:254.5px;top:28px;width:1px;height:14px;border-left:1px dotted #d0d0d0"></div>
<div class="t" style="left:256.5px;top:30px;color:#555;font-size:8px;letter-spacing:-.5px;">扣线门</div>
<div class="a" style="left:310.5px;top:28px;width:1px;height:14px;border-left:1px dotted #d0d0d0"></div>
<div class="t" style="left:312.5px;top:30px;color:#555;font-size:7.6px;letter-spacing:.45px;">3FO4KNM69MGG</div>
<div class="a" style="left:395.5px;top:28px;width:1px;height:14px;border-left:1px dotted #d0d0d0"></div>
<div class="t" style="left:397.5px;top:30px;color:#555;font-size:7.6px;letter-spacing:.45px;"></div>
<div class="a" style="left:439.5px;top:28px;width:1px;height:14px;border-left:1px dotted #d0d0d0"></div>
<div class="t" style="left:441.5px;top:30px;color:#555;font-size:8px;letter-spacing:-.5px;"></div>
<div class="a" style="left:484.5px;top:28px;width:1px;height:14px;border-left:1px dotted #d0d0d0"></div>
<div class="t" style="left:486.5px;top:30px;color:#555;font-size:8px;letter-spacing:-.5px;">个</div>
<div class="a" style="left:529.5px;top:28px;width:1px;height:14px;border-left:1px dotted #d0d0d0"></div>
<div class="t" style="left:531.5px;top:30px;color:#555;font-size:8px;letter-spacing:-.5px;"></div>
<div class="a" style="left:574.5px;top:28px;width:1px;height:14px;border-left:1px dotted #d0d0d0"></div>
<div class="t" style="left:576.5px;top:30px;color:#555;font-size:8px;letter-spacing:.75px;">6114</div>
<div class="a" style="left:619.5px;top:28px;width:1px;height:14px;border-left:1px dotted #d0d0d0"></div>
<div class="t" style="left:621.5px;top:30px;color:#555;font-size:8px;letter-spacing:.75px;">0</div>
<div class="a" style="left:704.0px;top:28px;width:1px;height:14px;border-left:1px dotted #d0d0d0"></div>
<div class="t" style="left:706.0px;top:30px;color:#555;font-size:8px;letter-spacing:.75px;">2019-09-18 10:58:42</div>
<div class="a" style="left:796.5px;top:28px;width:1px;height:14px;border-left:1px dotted #d0d0d0"></div>
<div class="t" style="left:798.5px;top:30px;color:#555;font-size:8px;letter-spacing:.75px;">2019-09-18</div>
<div class="a" style="left:0;top:42px;width:825px;height:14px;background:#efefef;border-bottom:1px solid #d4d4d4"></div>
<div class="a" style="left:0;top:42px;width:16px;height:13px;background:#f9f9f9"></div>
<div class="a" style="left:4px;top:45px;width:6.5px;height:7.5px;background:#e2e2e2;border:1px solid #c4c4c4;border-radius:1.5px"></div>
<div class="a" style="left:15.5px;top:42px;width:1px;height:14px;border-left:1px dotted #d0d0d0"></div>
<div class="t" style="left:17.5px;top:44px;color:#3030c8;font-size:8px;letter-spacing:-.5px;">金色装饰条2</div>
<div class="a" style="left:99.5px;top:42px;width:1px;height:14px;border-left:1px dotted #d0d0d0"></div>
<div class="t" style="left:101.5px;top:44px;color:#3030c8;font-size:8px;letter-spacing:-.5px;">配置孔槽(0)</div>
<div class="a" style="left:201.5px;top:42px;width:1px;height:14px;border-left:1px dotted #d0d0d0"></div>
<div class="t" style="left:203.5px;top:44px;color:#3030c8;font-size:8px;letter-spacing:-.5px;text-decoration:underline;text-decoration-color:#7a7ad8;">配置安装位置</div>
<div class="a" style="left:254.5px;top:42px;width:1px;height:14px;border-left:1px dotted #d0d0d0"></div>
<div class="t" style="left:256.5px;top:44px;color:#555;font-size:8px;letter-spacing:-.5px;">扣线门</div>
<div class="a" style="left:310.5px;top:42px;width:1px;height:14px;border-left:1px dotted #d0d0d0"></div>
<div class="t" style="left:312.5px;top:44px;color:#555;font-size:7.6px;letter-spacing:.45px;">3FO4M1SXAG28</div>
<div class="a" style="left:395.5px;top:42px;width:1px;height:14px;border-left:1px dotted #d0d0d0"></div>
<div class="t" style="left:397.5px;top:44px;color:#555;font-size:7.6px;letter-spacing:.45px;"></div>
<div class="a" style="left:439.5px;top:42px;width:1px;height:14px;border-left:1px dotted #d0d0d0"></div>
<div class="t" style="left:441.5px;top:44px;color:#555;font-size:8px;letter-spacing:-.5px;"></div>
<div class="a" style="left:484.5px;top:42px;width:1px;height:14px;border-left:1px dotted #d0d0d0"></div>
<div class="t" style="left:486.5px;top:44px;color:#555;font-size:8px;letter-spacing:-.5px;">个</div>
<div class="a" style="left:529.5px;top:42px;width:1px;height:14px;border-left:1px dotted #d0d0d0"></div>
<div class="t" style="left:531.5px;top:44px;color:#555;font-size:8px;letter-spacing:-.5px;"></div>
<div class="a" style="left:574.5px;top:42px;width:1px;height:14px;border-left:1px dotted #d0d0d0"></div>
<div class="t" style="left:576.5px;top:44px;color:#555;font-size:8px;letter-spacing:.75px;">2009</div>
<div class="a" style="left:619.5px;top:42px;width:1px;height:14px;border-left:1px dotted #d0d0d0"></div>
<div class="t" style="left:621.5px;top:44px;color:#555;font-size:8px;letter-spacing:.75px;">0</div>
<div class="a" style="left:704.0px;top:42px;width:1px;height:14px;border-left:1px dotted #d0d0d0"></div>
<div class="t" style="left:706.0px;top:44px;color:#555;font-size:8px;letter-spacing:.75px;">2019-04-10 17:08:35</div>
<div class="a" style="left:796.5px;top:42px;width:1px;height:14px;border-left:1px dotted #d0d0d0"></div>
<div class="t" style="left:798.5px;top:44px;color:#555;font-size:8px;letter-spacing:.75px;">2019-04-10</div>
<div class="a" style="left:0;top:56px;width:825px;height:14px;background:#efefef;border-bottom:1px solid #d4d4d4"></div>
<div class="a" style="left:0;top:56px;width:16px;height:13px;background:#f9f9f9"></div>
<div class="a" style="left:4px;top:59px;width:6.5px;height:7.5px;background:#e2e2e2;border:1px solid #c4c4c4;border-radius:1.5px"></div>
<div class="a" style="left:15.5px;top:56px;width:1px;height:14px;border-left:1px dotted #d0d0d0"></div>
<div class="t" style="left:17.5px;top:58px;color:#3030c8;font-size:8px;letter-spacing:-.5px;">金色装饰条1</div>
<div class="a" style="left:99.5px;top:56px;width:1px;height:14px;border-left:1px dotted #d0d0d0"></div>
<div class="t" style="left:101.5px;top:58px;color:#3030c8;font-size:8px;letter-spacing:-.5px;">配置孔槽(0)</div>
<div class="a" style="left:201.5px;top:56px;width:1px;height:14px;border-left:1px dotted #d0d0d0"></div>
<div class="t" style="left:203.5px;top:58px;color:#3030c8;font-size:8px;letter-spacing:-.5px;text-decoration:underline;text-decoration-color:#7a7ad8;">配置安装位置</div>
<div class="a" style="left:254.5px;top:56px;width:1px;height:14px;border-left:1px dotted #d0d0d0"></div>
<div class="t" style="left:256.5px;top:58px;color:#555;font-size:8px;letter-spacing:-.5px;">扣线门</div>
<div class="a" style="left:310.5px;top:56px;width:1px;height:14px;border-left:1px dotted #d0d0d0"></div>
<div class="t" style="left:312.5px;top:58px;color:#555;font-size:7.6px;letter-spacing:.45px;">3FO4M1SLMIK8</div>
<div class="a" style="left:395.5px;top:56px;width:1px;height:14px;border-left:1px dotted #d0d0d0"></div>
<div class="t" style="left:397.5px;top:58px;color:#555;font-size:7.6px;letter-spacing:.45px;"></div>
<div class="a" style="left:439.5px;top:56px;width:1px;height:14px;border-left:1px dotted #d0d0d0"></div>
<div class="t" style="left:441.5px;top:58px;color:#555;font-size:8px;letter-spacing:-.5px;"></div>
<div class="a" style="left:484.5px;top:56px;width:1px;height:14px;border-left:1px dotted #d0d0d0"></div>
<div class="t" style="left:486.5px;top:58px;color:#555;font-size:8px;letter-spacing:-.5px;">个</div>
<div class="a" style="left:529.5px;top:56px;width:1px;height:14px;border-left:1px dotted #d0d0d0"></div>
<div class="t" style="left:531.5px;top:58px;color:#555;font-size:8px;letter-spacing:-.5px;"></div>
<div class="a" style="left:574.5px;top:56px;width:1px;height:14px;border-left:1px dotted #d0d0d0"></div>
<div class="t" style="left:576.5px;top:58px;color:#555;font-size:8px;letter-spacing:.75px;">2008</div>
<div class="a" style="left:619.5px;top:56px;width:1px;height:14px;border-left:1px dotted #d0d0d0"></div>
<div class="t" style="left:621.5px;top:58px;color:#555;font-size:8px;letter-spacing:.75px;">0</div>
<div class="a" style="left:704.0px;top:56px;width:1px;height:14px;border-left:1px dotted #d0d0d0"></div>
<div class="t" style="left:706.0px;top:58px;color:#555;font-size:8px;letter-spacing:.75px;">2019-04-10 17:07:53</div>
<div class="a" style="left:796.5px;top:56px;width:1px;height:14px;border-left:1px dotted #d0d0d0"></div>
<div class="t" style="left:798.5px;top:58px;color:#555;font-size:8px;letter-spacing:.75px;">2019-04-10</div>
<div class="a" style="left:0;top:70px;width:825px;height:14px;background:#efefef;border-bottom:1px solid #d4d4d4"></div>
<div class="a" style="left:0;top:70px;width:16px;height:13px;background:#f9f9f9"></div>
<div class="a" style="left:4px;top:73px;width:6.5px;height:7.5px;background:#e2e2e2;border:1px solid #c4c4c4;border-radius:1.5px"></div>
<div class="a" style="left:15.5px;top:70px;width:1px;height:14px;border-left:1px dotted #d0d0d0"></div>
<div class="t" style="left:17.5px;top:72px;color:#3030c8;font-size:8px;letter-spacing:-.5px;">金色装饰条</div>
<div class="a" style="left:99.5px;top:70px;width:1px;height:14px;border-left:1px dotted #d0d0d0"></div>
<div class="t" style="left:101.5px;top:72px;color:#3030c8;font-size:8px;letter-spacing:-.5px;">配置孔槽(1)</div>
<div class="a" style="left:201.5px;top:70px;width:1px;height:14px;border-left:1px dotted #d0d0d0"></div>
<div class="t" style="left:203.5px;top:72px;color:#3030c8;font-size:8px;letter-spacing:-.5px;text-decoration:underline;text-decoration-color:#7a7ad8;">配置安装位置</div>
<div class="a" style="left:254.5px;top:70px;width:1px;height:14px;border-left:1px dotted #d0d0d0"></div>
<div class="t" style="left:256.5px;top:72px;color:#555;font-size:8px;letter-spacing:-.5px;">扣线门</div>
<div class="a" style="left:310.5px;top:70px;width:1px;height:14px;border-left:1px dotted #d0d0d0"></div>
<div class="t" style="left:312.5px;top:72px;color:#555;font-size:7.6px;letter-spacing:.45px;">3FO4M1QHJWXU</div>
<div class="a" style="left:395.5px;top:70px;width:1px;height:14px;border-left:1px dotted #d0d0d0"></div>
<div class="t" style="left:397.5px;top:72px;color:#555;font-size:7.6px;letter-spacing:.45px;">L</div>
<div class="a" style="left:439.5px;top:70px;width:1px;height:14px;border-left:1px dotted #d0d0d0"></div>
<div class="t" style="left:441.5px;top:72px;color:#555;font-size:8px;letter-spacing:-.5px;"></div>
<div class="a" style="left:484.5px;top:70px;width:1px;height:14px;border-left:1px dotted #d0d0d0"></div>
<div class="t" style="left:486.5px;top:72px;color:#555;font-size:8px;letter-spacing:-.5px;">条</div>
<div class="a" style="left:529.5px;top:70px;width:1px;height:14px;border-left:1px dotted #d0d0d0"></div>
<div class="t" style="left:531.5px;top:72px;color:#555;font-size:8px;letter-spacing:-.5px;"></div>
<div class="a" style="left:574.5px;top:70px;width:1px;height:14px;border-left:1px dotted #d0d0d0"></div>
<div class="t" style="left:576.5px;top:72px;color:#555;font-size:8px;letter-spacing:.75px;">2007</div>
<div class="a" style="left:619.5px;top:70px;width:1px;height:14px;border-left:1px dotted #d0d0d0"></div>
<div class="t" style="left:621.5px;top:72px;color:#555;font-size:8px;letter-spacing:.75px;">0</div>
<div class="a" style="left:704.0px;top:70px;width:1px;height:14px;border-left:1px dotted #d0d0d0"></div>
<div class="t" style="left:706.0px;top:72px;color:#555;font-size:8px;letter-spacing:.75px;">2019-04-10 17:06:59</div>
<div class="a" style="left:796.5px;top:70px;width:1px;height:14px;border-left:1px dotted #d0d0d0"></div>
<div class="t" style="left:798.5px;top:72px;color:#555;font-size:8px;letter-spacing:.75px;">2019-04-10</div>
</div>
<div class="a" style="left:248.5px;top:496px;width:825px;height:7.5px;background:#f1f1f1"></div>
<div class="a" style="left:258px;top:496px;width:749px;height:7.5px;background:#c3c3c3"></div>
<div class="t" style="left:251px;top:495px;color:#888;font-size:6px">◂</div>
<div class="t" style="left:1068px;top:495px;color:#444;font-size:6px">▸</div>
<div class="a" style="left:248.5px;top:503.5px;width:825px;height:17.5px;background:linear-gradient(#f8f8f8,#eceff3);border-top:1px solid #d8d8d8"></div>
<div class="a" style="left:248px;top:519px;width:826px;height:1px;background:#cfd4da"></div>
<svg style="left:250.5px;top:507.5px" width="8" height="8" viewBox="0 0 8 8"><rect x="1" y="0.8" width="1.5" height="6.6" fill="#5a7aa6"/><path d="M6.5 0.8 L2.5 4.1 L6.5 7.4Z" fill="#5a7aa6"/></svg>
<svg style="left:267px;top:507.5px" width="8" height="8" viewBox="0 0 8 8"><path d="M5.8 0.8 L1.8 4.1 L5.8 7.4Z" fill="#5a7aa6"/></svg>
<svg style="left:343.5px;top:507.5px" width="8" height="8" viewBox="0 0 8 8"><path d="M2 0.8 L6 4.1 L2 7.4Z" fill="#5a7aa6"/></svg>
<svg style="left:359.5px;top:507.5px" width="8" height="8" viewBox="0 0 8 8"><rect x="5.5" y="0.8" width="1.5" height="6.6" fill="#5a7aa6"/><path d="M1.5 0.8 L5.5 4.1 L1.5 7.4Z" fill="#5a7aa6"/></svg>
<svg style="left:383.5px;top:506px" width="11" height="11" viewBox="0 0 11 11"><path d="M2 5 A3.5 3.5 0 0 1 8.5 3.5 L9.5 2 L9.5 6 L6 6 L7.5 4.5 A2.3 2.3 0 0 0 3.5 5.5Z" fill="#4aa84a"/><path d="M9 6 A3.5 3.5 0 0 1 2.5 7.5 L1.5 9 L1.5 5 L5 5 L3.5 6.5 A2.3 2.3 0 0 0 7.5 5.5Z" fill="#6cc06c"/></svg>
<div class="a" style="left:263px;top:506px;width:1px;height:12px;background:#e6e9ee"></div>
<div class="a" style="left:281px;top:506px;width:1px;height:12px;background:#e6e9ee"></div>
<div class="a" style="left:339.5px;top:506px;width:1px;height:12px;background:#e6e9ee"></div>
<div class="a" style="left:376px;top:506px;width:1px;height:12px;background:#e6e9ee"></div>
<div class="a" style="left:398px;top:506px;width:1px;height:12px;background:#e6e9ee"></div>
<div class="a" style="left:470px;top:506px;width:1px;height:12px;background:#e6e9ee"></div>
<div class="t" style="left:286px;top:507px;color:#555;font-size:7px">页码</div>
<div class="a" style="left:305.5px;top:506px;width:11.5px;height:13px;background:#fff;border:1px solid #e2e2e2"></div>
<div class="t" style="left:307.5px;top:508px;color:#555">1</div>
<div class="t" style="left:324px;top:508px;color:#555">/ 1</div>
<div class="t" style="left:407.5px;top:507.5px;color:#555;font-size:7px;letter-spacing:.35px">第 1-6 条&nbsp; 共 6 条</div>
<div class="t" style="left:998px;top:507px;color:#555">每页</div>
<div class="a" style="left:1015.5px;top:505.5px;width:32.5px;height:16px;background:#fff;border:1px solid #e0e0e0"></div>
<div class="t" style="left:1020px;top:509px;color:#555;font-size:9px">15</div>
<div class="t" style="left:1040px;top:508px;color:#666;font-size:6px">▼</div>
<div class="t" style="left:1052px;top:507px;color:#555">条</div>
<svg style="left:1063px;top:507px" width="8" height="10" viewBox="0 0 8 10"><circle cx="4" cy="3.8" r="2.8" fill="none" stroke="#999" stroke-width=".8"/><path d="M3 7 H5 M3.3 8.5 H4.7" stroke="#999" stroke-width=".8"/></svg>
<svg style="left:887px;top:450px" width="50" height="40" viewBox="0 0 50 40"><defs><filter id="sh"><feDropShadow dx="-0.6" dy="0.8" stdDeviation="0.6" flood-color="#777" flood-opacity=".7"/></filter></defs><g fill="#fff" stroke="#b5b5b5" stroke-width="1.1" filter="url(#sh)"><path d="M16 3 C6 3 1 9 1 15 C1 19 3 22 6 24 L4 28 L9 25.5 C11 26.3 13.5 27 16 27 C26 27 31 21 31 15 C31 9 26 3 16 3Z"/><path d="M33 15 C25 15 20 20 20 26 C20 32 25 37 33 37 C35 37 37 36.6 38.5 36 L43 38.5 L41.5 34.5 C44 33 46 30 46 26 C46 20 41 15 33 15Z"/></g><circle cx="11" cy="11" r="1.3" fill="#aaa"/><circle cx="21" cy="11" r="1.3" fill="#aaa"/><circle cx="28.5" cy="23.5" r="1.2" fill="#aaa"/><circle cx="37.5" cy="23.5" r="1.2" fill="#aaa"/></svg>
<div class="t" style="left:938px;top:456.5px;font-size:26px;line-height:30px;color:#fff;letter-spacing:1px;text-shadow:-1px 1px 1px #5a5a5a, -.5px .5px 0 #9a9a9a, 0 0 1px #aaa">广州美屋</div>
<svg style="left:8px;top:487px" width="42" height="28" viewBox="0 0 42 28"><defs><filter id="sh2"><feDropShadow dx="0" dy="0.6" stdDeviation="1" flood-color="#666" flood-opacity=".85"/></filter></defs><g fill="none" stroke="#fff" filter="url(#sh2)"><path d="M2.5 6 L5 3.5 V24" stroke-width="3"/><path d="M11 10 A8.5 8.5 0 1 0 24 14" stroke-width="3.4"/><circle cx="25" cy="7" r="4" stroke-width="2"/><circle cx="34.5" cy="7" r="4" stroke-width="2"/></g></svg>
<div class="t" style="left:52px;top:488.5px;font-size:22px;line-height:25px;color:#fff;font-weight:bold;text-shadow:0 0 1px #666, 0 0 2.5px #8a8a8a, 0 1px 1px #777">大数跨境</div>
<div class="a" style="left:173px;top:27.5px;width:73px;height:25.5px;border:2.2px solid #c9363f;border-radius:2px"></div>
<div class="a" style="left:8px;top:96px;width:53px;height:15px;border:2px solid #c9363f;border-radius:2px"></div>
<div class="a" style="left:114px;top:377.5px;width:72px;height:15px;border:2px solid #c9363f;border-radius:2px"></div>
</body></html>
